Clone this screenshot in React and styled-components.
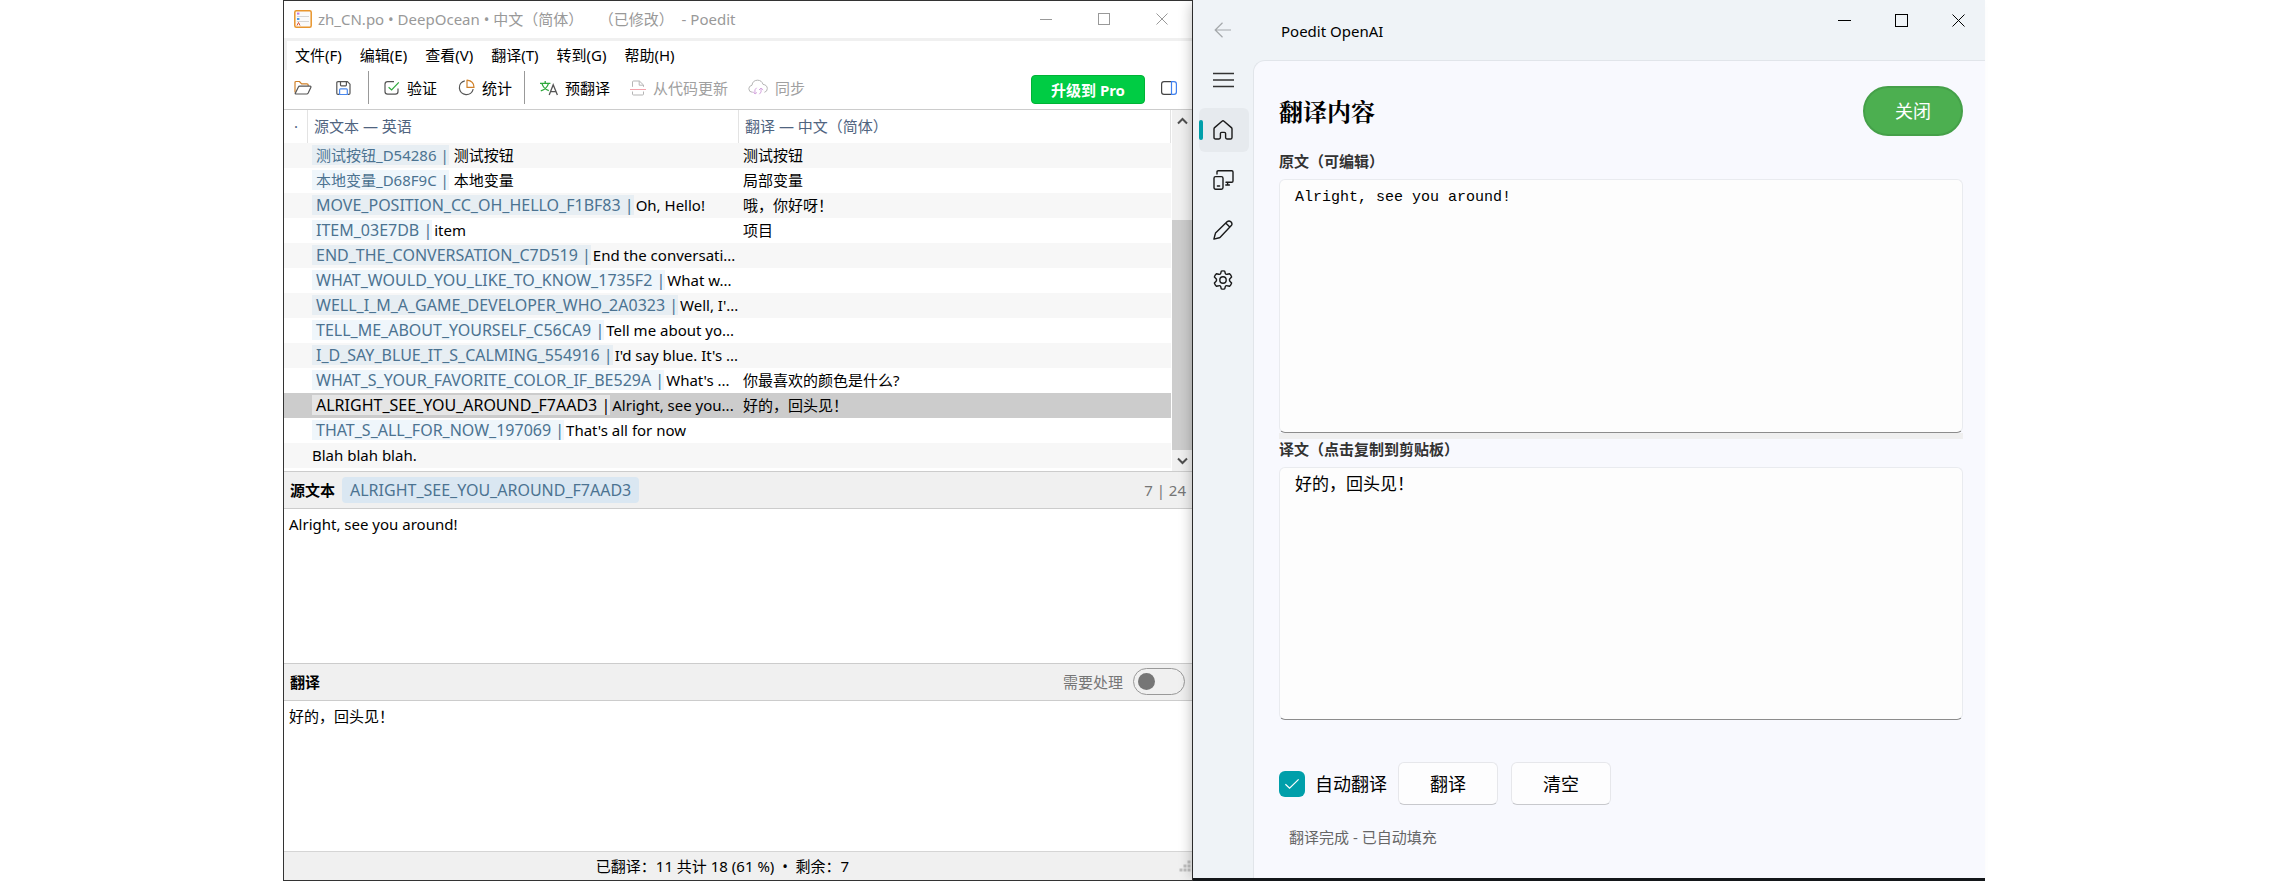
import React from "react";
import styled, { createGlobalStyle, css } from "styled-components";

const UI = `"Noto Sans", "Noto Sans CJK SC", sans-serif`;
const MONO = `"Liberation Mono", "Noto Sans CJK SC", monospace`;

const GlobalStyle = createGlobalStyle`
  *, *::before, *::after { box-sizing: border-box; }
  body { margin: 0; background: #fff; font: 15px/20px ${UI}; color: #000; }
  button, input, textarea { font: inherit; color: inherit; margin: 0; }
  button { background: none; border: 0; padding: 0; }
  svg { display: block; flex: none; }
`;

const Desktop = styled.div`
  display: grid;
  grid-template-columns: minmax(0, 910fr) minmax(0, 792fr);
  min-height: 100vh;
  padding: 0 284px 0 283px;
`;

/* ---------- editor window ---------- */

const EditorWindow = styled.section`
  display: flex;
  flex-direction: column;
  border: 1px solid #333;
  background: #fff;
  overflow: hidden;
`;

const TitleBar = styled.header`
  display: flex;
  align-items: center;
  height: 40px;
  padding: 0 1px 2px 10px;
  border-bottom: 3px solid #f0f0f0;
  color: #999;
`;

const TitleText = styled.h1`
  flex: 1;
  margin: 0 0 0 6px;
  font-size: 15px;
  font-weight: 400;
  white-space: pre;
`;

const WindowButton = styled.button`
  display: grid;
  place-items: center;
  width: ${(p) => p.$width}px;
  height: 28px;
`;

const MenuBar = styled.nav`
  display: flex;
  gap: 18px;
  height: 29px;
  align-items: center;
  padding: 0 8px 2px;
  border-left: 3px solid #f0f0f0;
`;

const MenuItem = styled.button`
  white-space: nowrap;
`;

const Toolbar = styled.div`
  display: flex;
  align-items: center;
  height: 40px;
  padding: 0 15px 4px 10px;
  border-bottom: 1px solid #ccc;
`;

const ToolGroup = styled.div`
  display: flex;
  align-items: center;
  gap: ${(p) => p.$gap}px;
`;

const ToolButton = styled.button`
  display: flex;
  align-items: center;
  gap: 7px;
  height: 32px;
  white-space: nowrap;
  color: ${(p) => (p.disabled ? "#a0a0a0" : "#000")};
`;

const ToolSeparator = styled.span`
  width: 1px;
  height: 33px;
  margin-left: ${(p) => p.$before}px;
  margin-right: 15px;
  background: #999;
`;

const UpgradeButton = styled.button`
  width: 114px;
  height: 29px;
  margin: 4px 16px 0 auto;
  border: 1px solid #00b336;
  border-radius: 4px;
  background: #00cc44;
  color: #fff;
  font-weight: 700;
`;

const ListArea = styled.div`
  display: flex;
  height: 362px;
  border-bottom: 1px solid #ccc;
`;

const CatalogTable = styled.table`
  flex: 1;
  width: 0;
  align-self: flex-start;
  table-layout: fixed;
  border-collapse: separate;
  border-spacing: 0;
`;

const HeadCell = styled.th`
  height: 33px;
  padding: 0 6px 2px;
  border-right: 1px solid #e3e3e3;
  color: #50647f;
  font-weight: 400;
  text-align: left;
  white-space: nowrap;
`;

const Row = styled.tr`
  background: ${(p) => (p.$selected ? "#ccc" : "#fff")};
  ${(p) => !p.$selected && css`&:nth-child(odd) { background: #f7f7f7; }`}
`;

const Cell = styled.td`
  height: 25px;
  padding: 0 0 2px 4px;
  white-space: nowrap;
`;

const CellLine = styled.div`
  display: flex;
  gap: ${(p) => (p.$latin ? 2 : 5)}px;
`;

const KeyTag = styled.span`
  padding-left: 4px;
  background: ${(p) => (p.$selected ? "#e5e5e5" : "rgba(51, 136, 204, 0.08)")};
  color: ${(p) => (p.$selected ? "#000" : "#4c7391")};
  font-size: ${(p) => (p.$latin ? 16 : 15)}px;
`;

const ScrollBar = styled.div`
  display: flex;
  flex-direction: column;
  align-items: stretch;
  width: 20px;
  margin-left: 1px;
  background: #f0f0f0;
`;

const ScrollArrow = styled.button`
  display: grid;
  place-items: center;
  height: 21px;
`;

const ScrollTrack = styled.div`
  display: flex;
  flex: 1;
  flex-direction: column;
  justify-content: flex-end;
`;

const ScrollThumb = styled.div`
  height: 72%;
  background: #cdcdcd;
`;

const PaneHeader = styled.div`
  display: flex;
  align-items: center;
  height: 37px;
  padding: 0 6px;
  border-bottom: 1px solid #ccc;
  background: #f0f0f0;
`;

const PaneTitle = styled.label`
  font-weight: 700;
`;

const ContextChip = styled.span`
  margin-left: 7px;
  padding: 3px 8px;
  border-radius: 4px;
  background: #dae7f2;
  color: #4c7391;
  font-size: 16px;
`;

const PaneNote = styled.span`
  margin-left: auto;
  color: #767676;
`;

const ToggleLabel = styled.label`
  display: flex;
  align-items: center;
  gap: 10px;
  margin-left: auto;
  padding: 0 1px 1px 0;
  color: #767676;
`;

const Toggle = styled.input`
  appearance: none;
  width: 52px;
  height: 27px;
  padding: 4px;
  border: 1px solid #999;
  border-radius: 14px;
  &::before {
    content: "";
    display: block;
    width: 17px;
    height: 17px;
    border-radius: 50%;
    background: #767676;
  }
`;

const PaneText = styled.textarea`
  display: block;
  width: 100%;
  flex: ${(p) => p.$grow} 1 0;
  min-height: 60px;
  padding: 5px;
  border: 0;
  background: #fff;
  outline: 0;
  resize: none;
`;

const TranslationPane = styled.div`
  border-top: 1px solid #ccc;
`;

const StatusBar = styled.footer`
  display: flex;
  align-items: center;
  height: 29px;
  padding-right: 1px;
  border-top: 1px solid #d5d5d5;
  background: #f0f0f0;
`;

const StatusText = styled.span`
  flex: 1;
  padding-right: 18px;
  text-align: center;
`;

/* ---------- assistant window ---------- */

const AssistantWindow = styled.section`
  position: relative;
  display: grid;
  grid-template-columns: 60px minmax(0, 1fr);
  grid-template-rows: 60px 1fr;
  border-bottom: 3px solid #14171a;
  background: #eff3f7;
  box-shadow: -6px 0 12px -4px rgba(0, 0, 0, 0.24);
`;

const BackButton = styled.button`
  display: grid;
  place-items: center;
`;

const AssistantTitleBar = styled.header`
  display: flex;
  align-items: flex-start;
  justify-content: space-between;
  padding-left: 28px;
`;

const AssistantTitle = styled.h2`
  margin: 21px 0 0;
  font-size: 15px;
  font-weight: 400;
`;

const WindowButtons = styled.div`
  display: flex;
  margin-right: -2px;
  padding-top: 6px;
`;

const SideNav = styled.nav`
  display: flex;
  flex-direction: column;
  align-items: center;
  gap: 6px;
  margin-top: -2px;
  padding: 0 4px 0 6px;
`;

const NavButton = styled.button`
  display: flex;
  align-items: center;
  width: 50px;
  height: 44px;
  padding-left: 14px;
  border-radius: 6px;
  ${(p) =>
    p.$active &&
    css`
      gap: 10px;
      padding-left: 0;
      background: #e6eaee;
      &::before {
        content: "";
        width: 4px;
        height: 20px;
        border-radius: 2px;
        background: #009faa;
      }
    `}
`;

const Content = styled.main`
  display: flex;
  flex-direction: column;
  padding: 25px 22px 31px 25px;
  border-top: 1px solid #e1e5ea;
  border-left: 1px solid #e1e5ea;
  border-top-left-radius: 12px;
  background: #f8f9fe;
`;

const ContentHead = styled.div`
  display: flex;
  align-items: center;
  justify-content: space-between;
  margin-bottom: 15px;
`;

const Heading = styled.h3`
  margin: 0;
  font-family: "Noto Serif CJK SC", "Noto Sans CJK SC", serif;
  font-size: 24px;
  line-height: 32px;
  font-weight: 700;
`;

const CloseButton = styled.button`
  width: 100px;
  height: 50px;
  border: 2px solid #45a049;
  border-radius: 25px;
  background: #4caf50;
  color: #fff;
  font-size: 18px;
`;

const FieldLabel = styled.label`
  color: #333;
  font-weight: 700;
`;

const TextField = styled.textarea`
  display: block;
  flex: 1 1 0;
  width: 100%;
  min-height: 80px;
  margin-top: 8px;
  padding: 8px 15px;
  border: 1px solid #e9ebef;
  border-bottom-color: #8c8c8c;
  border-radius: 6px;
  background: #fdfdfd;
  font-family: ${MONO};
  font-size: ${(p) => p.$size}px;
  outline: 0;
  resize: none;
`;

const Splitter = styled.hr`
  width: 100%;
  height: 6px;
  margin: 0;
  border: 0;
  background: #efefef;
`;

const Actions = styled.div`
  display: flex;
  align-items: center;
  margin-top: 42px;
  font-size: 18px;
`;

const CheckLabel = styled.label`
  display: flex;
  align-items: center;
  gap: 10px;
  margin-right: 11px;
`;

const CheckBox = styled.span`
  display: grid;
  width: 26px;
  height: 26px;
  place-items: center;
  border-radius: 6px;
  background: #009faa;
  > * { grid-area: 1 / 1; }
`;

const CheckInput = styled.input`
  appearance: none;
  width: 26px;
  height: 26px;
`;

const ActionButton = styled.button`
  width: 100px;
  height: 43px;
  margin-right: 13px;
  border: 1px solid #e6e7eb;
  border-bottom-color: #c8c9cd;
  border-radius: 6px;
  background: #fdfdfe;
`;

const Message = styled.p`
  margin: 22px 0 0 10px;
  color: #666;
`;

/* ---------- icons ---------- */

const Svg = ({ w, h, children, ...rest }) => (
  <svg width={w} height={h} viewBox={`0 0 ${w} ${h}`} fill="none" stroke="currentColor" aria-hidden="true" {...rest}>
    {children}
  </svg>
);

const AppIcon = () => (
  <Svg w={18} h={18}>
    <rect x="0.8" y="0.8" width="16.4" height="16.4" rx="1.5" fill="#fafafa" stroke="#e8952c" strokeWidth="1.5" />
    <path d="M3 6.5h12M3 11.5h12" stroke="#d4d4d4" />
    <path d="M3 3.6h2.4" stroke="#c07ae0" strokeWidth="2" />
    <path d="M3 9h2.4" stroke="#4a9be8" strokeWidth="2" />
    <path d="M3 15.5l1.5-3 1.5 3" stroke="#e0522c" />
  </Svg>
);
const MinimizeIcon = ({ s }) => <Svg w={s} h={s}><path d={`M0 ${Math.floor(s / 2)}.5h${s}`} /></Svg>;
const MaximizeIcon = ({ s }) => <Svg w={s} h={s}><rect x="0.5" y="0.5" width={s - 1} height={s - 1} /></Svg>;
const CloseIcon = ({ s }) => <Svg w={s} h={s}><path d={`M0.5 0.5l${s - 1} ${s - 1}M${s - 0.5} 0.5l-${s - 1} ${s - 1}`} /></Svg>;

const FolderIcon = () => (
  <Svg w={18} h={16} strokeLinejoin="round" strokeWidth="1.2">
    <path d="M1 12.5V2.6Q1 1.5 2.1 1.5H5.4L7.6 3.8H13Q14.2 3.8 14.2 5V6" stroke="#d08028" />
    <path d="M1.2 13.4L4.4 7Q4.8 6.2 5.7 6.2H16Q17.4 6.2 16.8 7.4L14.2 13Q13.7 14 12.7 14H2.2Q1 14 1.2 13.4Z" stroke="#555" />
  </Svg>
);
const SaveIcon = () => (
  <Svg w={15} h={16} strokeWidth="1.2">
    <path d="M3 14.4H2Q.8 14.4.8 13.2V2.8Q.8 1.6 2 1.6H11.4L14 4.2V13.2Q14 14.4 12.8 14.4H12" stroke="#555" />
    <path d="M4.5 1.6V5Q4.5 5.8 5.3 5.8H9.6Q10.4 5.8 10.4 5V1.6" stroke="#555" />
    <path d="M3.6 14.5V9.8Q3.6 8.9 4.5 8.9H10.4Q11.3 8.9 11.3 9.8V14.5Z" stroke="#4a88ee" />
  </Svg>
);
const VerifyIcon = () => (
  <Svg w={16} h={16} strokeWidth="1.2">
    <path d="M10 1.6H3.6Q1 1.6 1 4.2V11.6Q1 14.2 3.6 14.2H11.4Q14 14.2 14 11.6V8.6" stroke="#555" />
    <path d="M4.6 7.2L7.6 10 14.8 2.4" stroke="#2fa83c" />
  </Svg>
);
const PieIcon = () => (
  <Svg w={17} h={17} strokeWidth="1.2">
    <path d="M6.8 1.8A7 7 0 1 0 15.2 10.2" stroke="#555" />
    <path d="M9 1.2V8.4H16Q16 2 9 1.2Z" stroke="#d08028" strokeLinejoin="round" />
  </Svg>
);
const TranslateIcon = () => (
  <Svg w={18} h={16} strokeWidth="1.3">
    <path d="M0 3.4H10.4M5.2 1V3.4M2 3.6Q3.6 9 8.8 10.6M8.4 3.6Q6.8 9 .8 10.8" stroke="#2fa83c" />
    <path d="M9.2 15L13.2 4.8 17.4 15M10.6 11.6H16" stroke="#555" />
  </Svg>
);
const CodeUpdateIcon = () => (
  <Svg w={16} h={16}>
    <path d="M2.5 6.8V2Q2.5 1 3.5 1H9.4L13.5 5V6.8M9.2 1V5.2H13.5M2.5 11.5V14Q2.5 15 3.5 15H12.5Q13.5 15 13.5 14V11.5" stroke="#b5b5b5" />
    <path d="M0 9.5H16" stroke="#f3a3ac" />
  </Svg>
);
const CloudIcon = () => (
  <Svg w={20} h={17}>
    <path d="M4.6 13.4Q.8 13 .8 9.8 .8 7 4 6.2 4.6 1.4 9.4 1.2 13.8 1.2 15 5.4 19.3 6 19.3 9.6 19.3 12.6 16.4 13.3" stroke="#b5b5b5" />
    <path d="M8.6 8.8Q6 10 7 14.6M5 12.6L7 15l2-1.6M11.4 15.2Q14 13.6 13 9.4M11 11L13 9l2.2 2" stroke="#d5a6de" />
  </Svg>
);
const SidebarIcon = () => (
  <Svg w={16} h={14}>
    <path d="M10.5 .6H3Q.6.6.6 3V11Q.6 13.4 3 13.4H10.5" stroke="#444" strokeWidth="1.2" />
    <path d="M10.5 .6H13Q15.4.6 15.4 3V11Q15.4 13.4 13 13.4H10.5Z" stroke="#3f80ee" strokeWidth="1.2" />
  </Svg>
);
const ChevronIcon = ({ down }) => (
  <Svg w={11} h={8} stroke="#505050" strokeWidth="2">
    <path d={down ? "M1 1.5L5.5 6 10 1.5" : "M1 6.5L5.5 2 10 6.5"} />
  </Svg>
);
const GripIcon = () => (
  <Svg w={12} h={12} stroke="none" fill="#bfbfbf">
    <path d="M8.5 .5h3v3h-3zM4.5 4.5h3v3h-3zM8.5 4.5h3v3h-3zM.5 8.5h3v3h-3zM4.5 8.5h3v3h-3zM8.5 8.5h3v3h-3z" />
  </Svg>
);
const BackIcon = () => (
  <Svg w={18} h={16} stroke="#a4a8ab" strokeWidth="1.2">
    <path d="M8.5 .8L1.2 8l7.3 7.2M1.2 8H17" />
  </Svg>
);
const navStroke = { strokeWidth: 1.4, strokeLinejoin: "round", strokeLinecap: "round", stroke: "#1a1a1a" };
const MenuIcon = () => <Svg w={21} h={20} stroke="#333" strokeWidth="1.4"><path d="M0 3.5H21M0 10H21M0 16.5H21" /></Svg>;
const HomeIcon = () => (
  <Svg w={20} h={20} {...navStroke}>
    <path d="M1 8.9Q1 8.1 1.6 7.6L9 1.2Q10 .4 11 1.2L18.4 7.6Q19 8.1 19 8.9V17.4Q19 19 17.4 19H14Q12.6 19 12.6 17.6V13.6Q12.6 12.4 11.4 12.4H8.6Q7.4 12.4 7.4 13.6V17.6Q7.4 19 6 19H2.6Q1 19 1 17.4Z" />
  </Svg>
);
const DevicesIcon = () => (
  <Svg w={21} h={20} {...navStroke}>
    <path d="M4 4V2Q4 .8 5.2 .8H18.8Q20 .8 20 2V11Q20 12.2 18.8 12.2H13M14.6 12.4V15M12.8 15H16.4" />
    <rect x="1" y="6.6" width="9" height="12.6" rx="1.6" />
    <path d="M4.4 16H6.6" />
  </Svg>
);
const PenIcon = () => (
  <Svg w={20} h={20} {...navStroke}>
    <path d="M.9 19.1L2.3 13.7Q2.4 13.2 2.8 12.8L14.3 1.6Q16 .2 17.9 1.7 19.8 3.7 18.3 5.6L7.2 17.2Q6.8 17.6 6.3 17.7ZM12.9 3.2L16.8 7.1" />
  </Svg>
);
const GearIcon = () => (
  <Svg w={20} h={20} {...navStroke}>
    <path d="M8.3 1.1Q10 .6 11.7 1.1L12.3 3.4Q12.9 4.7 14.2 4.3L16.6 3.7Q18 5 18.6 6.9L16.9 8.7Q16 10 16.9 11.3L18.6 13.1Q18 15 16.6 16.3L14.2 15.7Q12.9 15.3 12.3 16.6L11.7 18.9Q10 19.4 8.3 18.9L7.7 16.6Q7.1 15.3 5.8 15.7L3.4 16.3Q2 15 1.4 13.1L3.1 11.3Q4 10 3.1 8.7L1.4 6.9Q2 5 3.4 3.7L5.8 4.3Q7.1 4.7 7.7 3.4Z" />
    <circle cx="10" cy="10" r="3.2" />
  </Svg>
);
const TickIcon = () => <Svg w={16} h={12} stroke="#fff" strokeWidth="1.2"><path d="M1.4 6.2L5.6 10.2 14.6 1.4" /></Svg>;

/* ---------- data ---------- */

const menus = ["文件(F)", "编辑(E)", "查看(V)", "翻译(T)", "转到(G)", "帮助(H)"];

const entries = [
  { key: "测试按钮_D54286", source: "测试按钮", target: "测试按钮" },
  { key: "本地变量_D68F9C", source: "本地变量", target: "局部变量" },
  { key: "MOVE_POSITION_CC_OH_HELLO_F1BF83", source: "Oh, Hello!", target: "哦，你好呀！" },
  { key: "ITEM_03E7DB", source: "item", target: "项目" },
  { key: "END_THE_CONVERSATION_C7D519", source: "End the conversati..." },
  { key: "WHAT_WOULD_YOU_LIKE_TO_KNOW_1735F2", source: "What w..." },
  { key: "WELL_I_M_A_GAME_DEVELOPER_WHO_2A0323", source: "Well, I'..." },
  { key: "TELL_ME_ABOUT_YOURSELF_C56CA9", source: "Tell me about yo..." },
  { key: "I_D_SAY_BLUE_IT_S_CALMING_554916", source: "I'd say blue. It's ..." },
  { key: "WHAT_S_YOUR_FAVORITE_COLOR_IF_BE529A", source: "What's ...", target: "你最喜欢的颜色是什么?" },
  { key: "ALRIGHT_SEE_YOU_AROUND_F7AAD3", source: "Alright, see you...", target: "好的，回头见！", selected: true },
  { key: "THAT_S_ALL_FOR_NOW_197069", source: "That's all for now" },
  { source: "Blah blah blah." },
];

const isLatin = (text = "") => /^[\x20-\x7e]+$/.test(text);

const navItems = [
  { label: "菜单", icon: <MenuIcon /> },
  { label: "主页", icon: <HomeIcon />, active: true },
  { label: "设备", icon: <DevicesIcon /> },
  { label: "编辑", icon: <PenIcon /> },
  { label: "设置", icon: <GearIcon /> },
];

const WindowControls = ({ width, size }) => (
  <>
    <WindowButton $width={width} aria-label="最小化"><MinimizeIcon s={size} /></WindowButton>
    <WindowButton $width={width} aria-label="最大化"><MaximizeIcon s={size} /></WindowButton>
    <WindowButton $width={width} aria-label="关闭窗口"><CloseIcon s={size} /></WindowButton>
  </>
);

const Editor = () => (
  <EditorWindow>
    <TitleBar>
      <AppIcon />
      <TitleText>zh_CN.po • DeepOcean • 中文（简体）    （已修改）  - Poedit</TitleText>
      <WindowControls width={58} size={12} />
    </TitleBar>
    <MenuBar>
      {menus.map((m) => <MenuItem key={m}>{m}</MenuItem>)}
    </MenuBar>
    <Toolbar>
      <ToolGroup $gap={24}>
        <ToolButton aria-label="打开"><FolderIcon /></ToolButton>
        <ToolButton aria-label="保存"><SaveIcon /></ToolButton>
      </ToolGroup>
      <ToolSeparator $before={17} />
      <ToolGroup $gap={21}>
        <ToolButton><VerifyIcon />验证</ToolButton>
        <ToolButton><PieIcon />统计</ToolButton>
      </ToolGroup>
      <ToolSeparator $before={12} />
      <ToolGroup $gap={20}>
        <ToolButton><TranslateIcon />预翻译</ToolButton>
        <ToolButton disabled><CodeUpdateIcon />从代码更新</ToolButton>
        <ToolButton disabled><CloudIcon />同步</ToolButton>
      </ToolGroup>
      <UpgradeButton>升级到 Pro</UpgradeButton>
      <button aria-label="侧边栏"><SidebarIcon /></button>
    </Toolbar>
    <ListArea>
      <CatalogTable>
        <colgroup>
          <col width="24" />
          <col width="431" />
          <col />
        </colgroup>
        <thead>
          <tr>
            <HeadCell>&nbsp;·</HeadCell>
            <HeadCell>源文本 — 英语</HeadCell>
            <HeadCell>翻译 — 中文（简体）</HeadCell>
          </tr>
        </thead>
        <tbody>
          {entries.map((e) => (
            <Row key={e.source + e.key} $selected={e.selected}>
              <Cell />
              <Cell>
                <CellLine $latin={isLatin(e.key)}>
                  {e.key && <KeyTag $selected={e.selected} $latin={isLatin(e.key)}>{e.key} |</KeyTag>}
                  <span>{e.source}</span>
                </CellLine>
              </Cell>
              <Cell>{e.target}</Cell>
            </Row>
          ))}
        </tbody>
      </CatalogTable>
      <ScrollBar>
        <ScrollArrow aria-label="向上滚动"><ChevronIcon /></ScrollArrow>
        <ScrollTrack><ScrollThumb /></ScrollTrack>
        <ScrollArrow aria-label="向下滚动"><ChevronIcon down /></ScrollArrow>
      </ScrollBar>
    </ListArea>
    <PaneHeader>
      <PaneTitle htmlFor="po-source">源文本</PaneTitle>
      <ContextChip>ALRIGHT_SEE_YOU_AROUND_F7AAD3</ContextChip>
      <PaneNote>7 | 24</PaneNote>
    </PaneHeader>
    <PaneText id="po-source" $grow={31} readOnly value="Alright, see you around!" />
    <TranslationPane>
      <PaneHeader>
        <PaneTitle htmlFor="po-target">翻译</PaneTitle>
        <ToggleLabel>需要处理<Toggle type="checkbox" role="switch" /></ToggleLabel>
      </PaneHeader>
    </TranslationPane>
    <PaneText id="po-target" $grow={30} defaultValue="好的，回头见！" />
    <StatusBar>
      <StatusText>已翻译：11 共计 18 (61 %)&nbsp; •&nbsp; 剩余：7</StatusText>
      <GripIcon />
    </StatusBar>
  </EditorWindow>
);

const Assistant = () => (
  <AssistantWindow>
    <BackButton aria-label="返回"><BackIcon /></BackButton>
    <AssistantTitleBar>
      <AssistantTitle>Poedit OpenAI</AssistantTitle>
      <WindowButtons><WindowControls width={57} size={13} /></WindowButtons>
    </AssistantTitleBar>
    <SideNav>
      {navItems.map((n) => (
        <NavButton key={n.label} aria-label={n.label} $active={n.active}>{n.icon}</NavButton>
      ))}
    </SideNav>
    <Content>
      <ContentHead>
        <Heading>翻译内容</Heading>
        <CloseButton>关闭</CloseButton>
      </ContentHead>
      <FieldLabel htmlFor="ai-source">原文（可编辑）</FieldLabel>
      <TextField id="ai-source" $size={15} defaultValue="Alright, see you around!" />
      <Splitter />
      <FieldLabel htmlFor="ai-target">译文（点击复制到剪贴板）</FieldLabel>
      <TextField id="ai-target" $size={17} readOnly value="好的，回头见！" />
      <Actions>
        <CheckLabel>
          <CheckBox>
            <CheckInput type="checkbox" defaultChecked />
            <TickIcon />
          </CheckBox>
          自动翻译
        </CheckLabel>
        <ActionButton>翻译</ActionButton>
        <ActionButton>清空</ActionButton>
      </Actions>
      <Message>翻译完成 - 已自动填充</Message>
    </Content>
  </AssistantWindow>
);

export default function App() {
  return (
    <>
      <GlobalStyle />
      <Desktop>
        <Editor />
        <Assistant />
      </Desktop>
    </>
  );
}
